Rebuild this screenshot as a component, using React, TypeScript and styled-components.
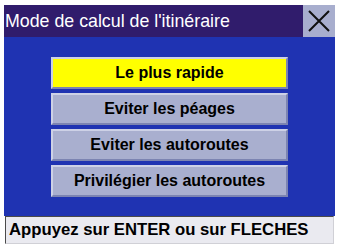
import styled, { createGlobalStyle } from "styled-components";

const Global = createGlobalStyle`
    html, body {
        margin: 0;
        padding: 0;
        background: #ffffff;
    }
    * {
        box-sizing: border-box;
    }
`

const Screen = styled.div`
    width: 337px;
    height: 248px;
    padding: 5px 2px 0 4px;
    display: flex;
    flex-direction: column;
    background: #ffffff;
    font-family: "Liberation Sans", Arial, sans-serif;
`

const Header = styled.div`
    height: 32px;
    display: flex;
    align-items: stretch;
    background: #301c6c;
`

const Title = styled.div`
    flex: 1;
    display: flex;
    align-items: center;
    padding-left: 1px;
    color: #ffffff;
    font-size: 17.8px;
    white-space: nowrap;
`

const CloseButton = styled.div`
    width: 32px;
    display: flex;
    align-items: center;
    justify-content: center;
    background: #a8aece;
`

const Body = styled.div`
    height: 179px;
    display: flex;
    flex-direction: column;
    align-items: center;
    gap: 4px;
    padding-top: 20px;
    background: #1f33b2;
`

const Option = styled.div<{ selected?: boolean }>`
    width: 237px;
    height: 32px;
    display: flex;
    align-items: center;
    justify-content: center;
    border: 2px solid;
    border-color: #cdd1e6 #7c84b2 #7c84b2 #cdd1e6;
    background: ${props => props.selected ? "#ffff00" : "#a9afcf"};
    color: #000000;
    font-size: 16px;
    font-weight: bold;
`

const Footer = styled.div`
    height: 28px;
    margin: 0 1px 0 1px;
    display: flex;
    align-items: center;
    padding-left: 3px;
    border: 1px solid;
    border-color: #4a4a4a #d0d0d6 #d0d0d6 #4a4a4a;
    background: #eaeaf0;
    color: #000000;
    font-size: 16.7px;
    font-weight: bold;
    white-space: nowrap;
`

const options = [
    "Le plus rapide",
    "Eviter les péages",
    "Eviter les autoroutes",
    "Privilégier les autoroutes",
]

export default function App() {
    return (
        <>
            <Global />
            <Screen>
                <Header>
                    <Title>Mode de calcul de l'itinéraire</Title>
                    <CloseButton>
                        <svg width="24" height="24" viewBox="0 0 24 24">
                            <path d="M2 2 L22 22 M22 2 L2 22" stroke="#101010" strokeWidth="2" />
                        </svg>
                    </CloseButton>
                </Header>
                <Body>
                    {options.map((o, i) => (
                        <Option key={o} selected={i === 0}>{o}</Option>
                    ))}
                </Body>
                <Footer>Appuyez sur ENTER ou sur FLECHES</Footer>
            </Screen>
        </>
    )
}
